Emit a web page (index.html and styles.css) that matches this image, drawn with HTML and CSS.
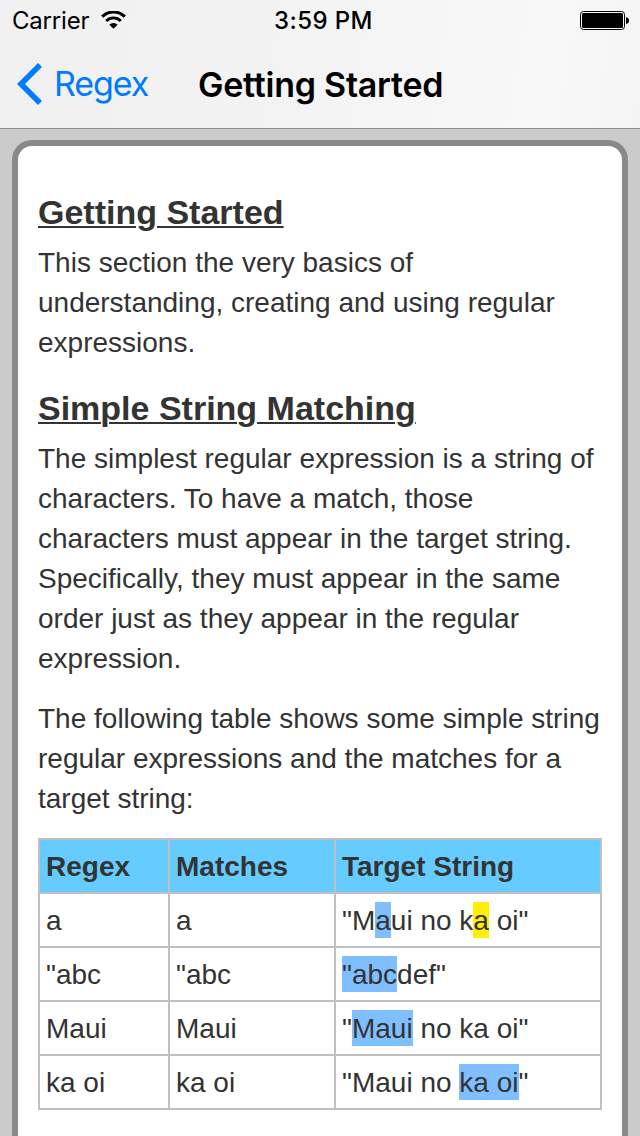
FILE: index.html
```html
<!DOCTYPE html>
<html lang="en">
    <head>
        <title>Getting Started</title>
        <meta charset="UTF-8">
        <meta name="viewport" content="width=device-width, initial-scale=1.0">
        <link rel="stylesheet" href="styles.css">
    </head>
    <body>
        <header class="top-bar">
            <div class="status-bar">
                <div class="carrier">
                    <span>Carrier</span>
                    <svg class="wifi" width="25" height="18" viewBox="0 0 25 18">
                        <path d="M1.2 5.6 A16 16 0 0 1 23.8 5.6" fill="none" stroke="#000" stroke-width="3"/>
                        <path d="M5.2 10 A10.3 10.3 0 0 1 19.8 10" fill="none" stroke="#000" stroke-width="2.8"/>
                        <path d="M8.4 13.7 A5.8 5.8 0 0 1 16.6 13.7 L12.5 17.8 Z" fill="#000"/>
                    </svg>
                </div>
                <div class="time">3:59 PM</div>
                <svg class="battery" width="49" height="19" viewBox="0 0 49 19">
                    <rect x="0.5" y="0.5" width="44" height="18" rx="3" fill="none" stroke="#000"/>
                    <rect x="2" y="2" width="41" height="15" rx="1.5" fill="#000"/>
                    <path d="M46 6 Q49 6.5 49 9.5 Q49 12.5 46 13 Z" fill="#000"/>
                </svg>
            </div>
            <nav class="nav-bar">
                <a class="back" href="#">
                    <svg width="26" height="42" viewBox="0 0 26 42">
                        <path d="M24 2 L5 21 L24 40" fill="none" stroke="#007aff" stroke-width="5.6"/>
                    </svg>
                    <span class="back-label">Regex</span>
                </a>
                <div class="nav-title">Getting Started</div>
            </nav>
        </header>

        <main class="card">
            <h2>Getting Started</h2>
            <p>This section the very basics of understanding, creating and using regular expressions.</p>

            <h2>Simple String Matching</h2>
            <p>The simplest regular expression is a string of characters. To have a match, those characters must appear in the target string. Specifically, they must appear in the same order just as they appear in the regular expression.</p>
            <p>The following table shows some simple string regular expressions and the matches for a target string:</p>

            <table>
                <colgroup>
                    <col class="col-regex">
                    <col class="col-matches">
                    <col>
                </colgroup>
                <tr>
                    <th>Regex</th>
                    <th>Matches</th>
                    <th>Target String</th>
                </tr>
                <tr>
                    <td>a</td>
                    <td>a</td>
                    <td>"M<span class="match">a</span>ui no k<span class="match-alt">a</span> oi"</td>
                </tr>
                <tr>
                    <td>"abc</td>
                    <td>"abc</td>
                    <td><span class="match">"abc</span>def"</td>
                </tr>
                <tr>
                    <td>Maui</td>
                    <td>Maui</td>
                    <td>"<span class="match">Maui</span> no ka oi"</td>
                </tr>
                <tr>
                    <td>ka oi</td>
                    <td>ka oi</td>
                    <td>"Maui no <span class="match">ka oi</span>"</td>
                </tr>
            </table>
        </main>
    </body>
</html>
```

FILE: styles.css
```css
* {
    box-sizing: border-box;
    margin: 0;
    padding: 0;
}

body {
    display: flex;
    flex-direction: column;
    height: 1136px;
    overflow: hidden;
    background: #cbcbcb;
    color: #333;
    font-family: "Liberation Sans", Arial, sans-serif;
    font-size: 28px;
    line-height: 40px;
}

.top-bar {
    height: 129px;
    background: linear-gradient(100deg, #f0f0f0 0%, #f3f3f3 45%, #f8f8f8 85%, #f4f4f4 100%);
    border-bottom: 1px solid #8e8e8e;
    color: #000;
    font-family: Inter, sans-serif;
}

.status-bar {
    display: grid;
    grid-template-columns: 1fr auto 1fr;
    align-items: center;
    height: 40px;
    padding: 0 11px 0 12px;
    font-size: 24px;
    line-height: 38px;
}

.carrier {
    display: flex;
    align-items: center;
    gap: 12px;
    padding-top: 2px;
    letter-spacing: -0.2px;
}

.wifi {
    margin-bottom: 3px;
}

.time {
    padding: 2px 0 0 6px;
    font-weight: 500;
    letter-spacing: 0.4px;
}

.battery {
    justify-self: end;
}

.nav-bar {
    display: grid;
    grid-template-columns: 182px auto 1fr;
    align-items: center;
    height: 88px;
    padding-left: 16px;
    font-size: 34px;
}

.back {
    display: flex;
    align-items: center;
    gap: 12px;
    color: #007aff;
    text-decoration: none;
}

.back-label {
    letter-spacing: -1.1px;
}

.nav-title {
    padding-top: 1px;
    font-weight: 600;
    letter-spacing: -0.25px;
}

.card {
    flex: 1;
    margin: 11px 12px 0;
    padding: 42px 20px 0;
    background: #fff;
    border: 6px solid #888;
    border-bottom: none;
    border-radius: 20px 20px 0 0;
}

h2 {
    margin-bottom: 7px;
    font-size: 34px;
    line-height: 48px;
    text-decoration: underline;
    text-decoration-thickness: 2px;
    text-underline-offset: 2px;
}

p {
    margin-bottom: 20px;
}

p + h2 {
    margin-top: 21px;
}

table {
    width: 564px;
    margin-top: -1px;
    table-layout: fixed;
    border-collapse: collapse;
}

.col-regex {
    width: 130px;
}

.col-matches {
    width: 166px;
}

th, td {
    padding: 7px 6px 5px;
    border: 2px solid #c0c0c0;
    text-align: left;
}

th {
    background: #66ccff;
}

.match, .match-alt {
    padding: 3px 0 2px;
    background: #80bfff;
}

.match-alt {
    background: #ffef00;
}
```
